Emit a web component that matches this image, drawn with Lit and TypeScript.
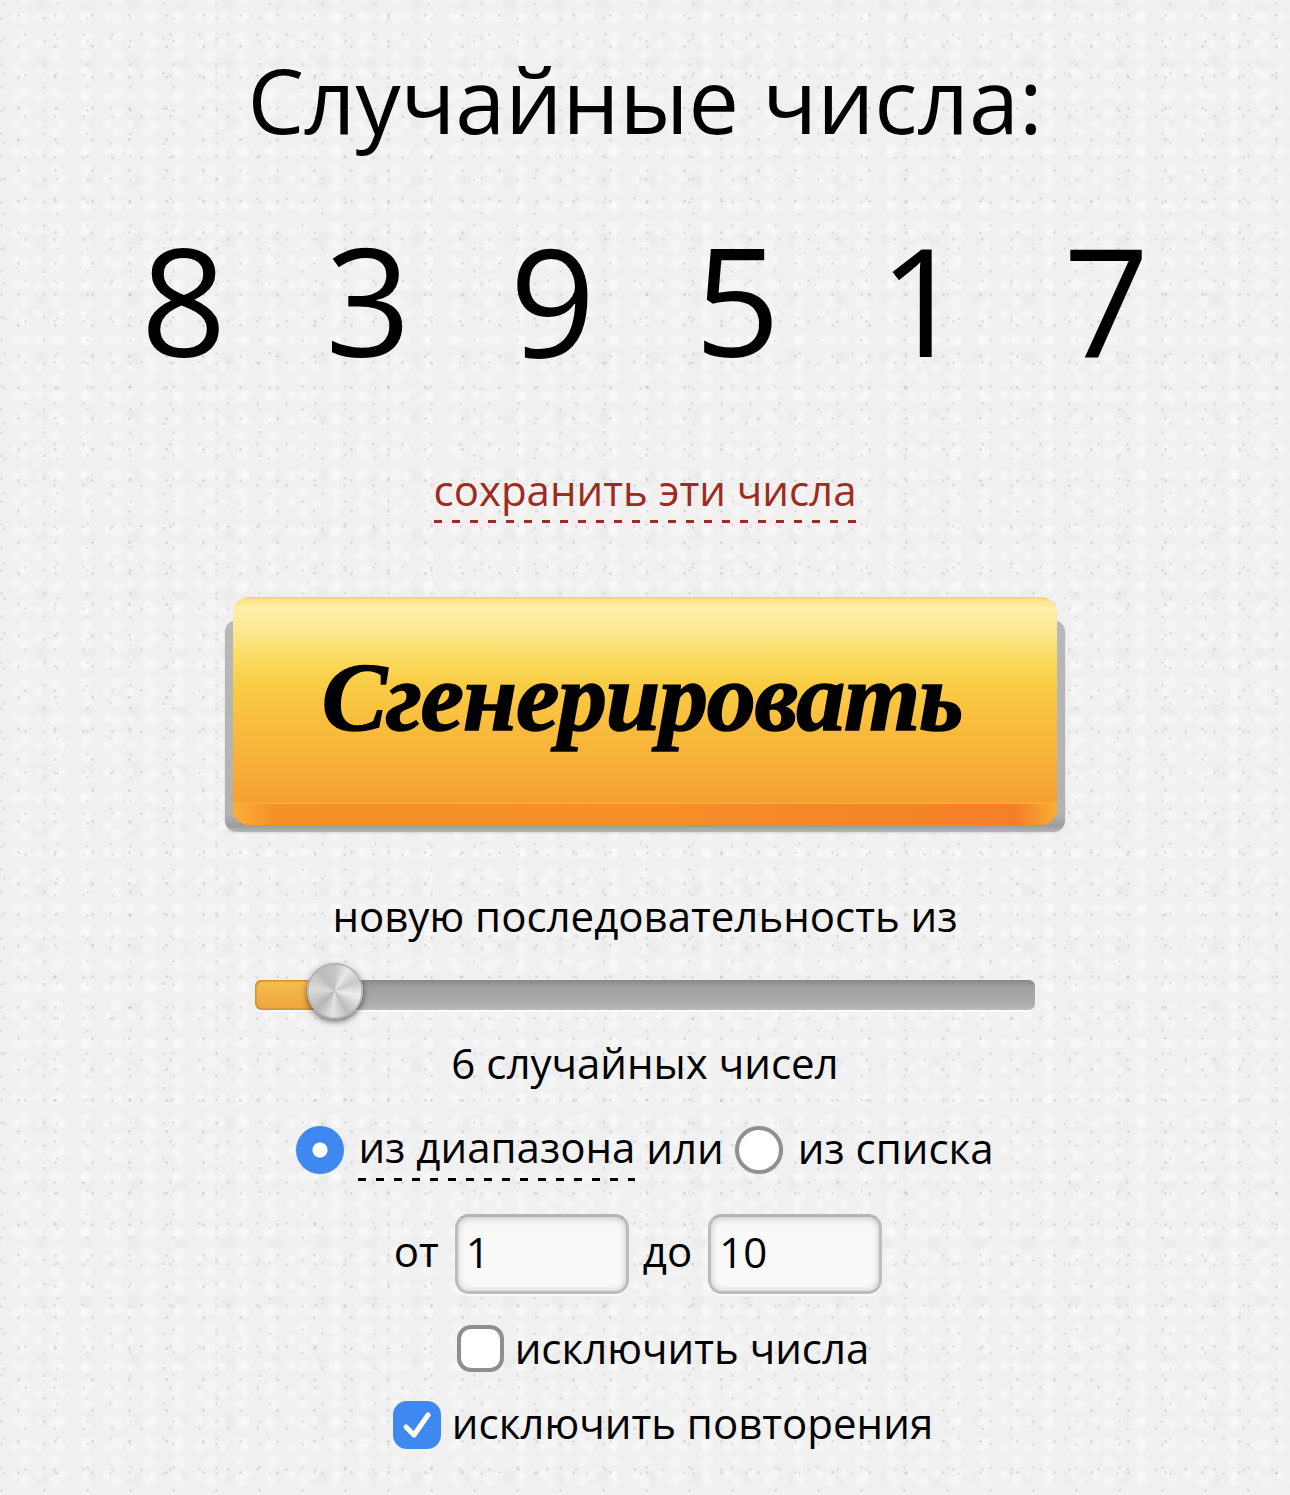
import { LitElement, html, css } from "lit";
import { customElement } from "lit/decorators.js";

const digits = [8, 3, 9, 5, 1, 7];

@customElement("app-root")
export class AppRoot extends LitElement {
  static styles = css`
    :host {
      display: block;
      width: 1290px;
      height: 1495px;
      overflow: hidden;
      color: #000;
      font-family: "Open Sans", "Noto Sans", sans-serif;
      font-size: 42px;
      background-color: #f0f0f0;
      background-image:
        radial-gradient(circle, rgba(110,110,110,.2) .8px, transparent 2px),
        radial-gradient(circle, rgba(110,110,110,.17) .8px, transparent 2px),
        radial-gradient(circle, rgba(110,110,110,.15) .8px, transparent 2px),
        radial-gradient(circle, rgba(110,110,110,.14) .8px, transparent 2px),
        radial-gradient(circle, rgba(255,255,255,.42) 2px, transparent 6px),
        radial-gradient(circle, rgba(255,255,255,.36) 3px, transparent 8px),
        radial-gradient(circle, rgba(150,150,150,.05) 3px, transparent 9px);
      background-size: 37px 31px, 29px 41px, 43px 23px, 53px 35px, 23px 27px, 31px 19px, 47px 59px;
      background-position: 0 0, 11px 14px, 23px 7px, 31px 21px, 4px 3px, 9px 8px, 17px 33px;
    }
    .page {
      display: flex;
      flex-direction: column;
      align-items: center;
    }
    h1 {
      margin: 38px 0 0;
      font-size: 90px;
      font-weight: 400;
      line-height: 122px;
      white-space: nowrap;
    }
    .digits {
      display: flex;
      margin-top: 37px;
      font-size: 150px;
      line-height: 204px;
    }
    .digits span { width: 184.6px; text-align: center; }
    .save {
      margin-top: 64px;
      color: #9e2b20;
      line-height: 50px;
      height: 58px;
      box-sizing: border-box;
      white-space: nowrap;
      background-image: linear-gradient(90deg, currentColor 8px, transparent 8px);
      background-size: 18px 3px;
      background-repeat: repeat-x;
      background-position: 0 bottom;
    }
    .gen-wrap {
      position: relative;
      margin-top: 74px;
      width: 824px;
      height: 228px;
    }
    .gen-wrap::before {
      content: "";
      position: absolute;
      left: -8px;
      right: -8px;
      top: 23px;
      bottom: -7px;
      border-radius: 12px;
      background: linear-gradient(#b8b8b8, #b2b2b2 92%, #9c9c9c 97%, #b5b5b5);
      box-shadow: 0 1px 2px rgba(0,0,0,.12);
    }
    .gen {
      position: relative;
      display: flex;
      align-items: center;
      justify-content: center;
      box-sizing: border-box;
      width: 100%;
      height: 100%;
      padding: 0 6px 28px 0;
      border: 0;
      border-radius: 16px;
      overflow: hidden;
      color: #000;
      font-family: "Liberation Serif", "DejaVu Serif", serif;
      font-style: italic;
      font-weight: 700;
      font-size: 98px;
      line-height: 1;
      letter-spacing: -1.3px;
      -webkit-text-stroke: 1.6px #000;
      background: linear-gradient(#f2d24e 0, #f7e283 1%, #fdeea8 5%, #fce995 14%, #fbdc62 26%, #f9cd45 38%, #f9c23f 50%, #f7b038 72%, #f4a033 90%, #f6a634 100%);
    }
    .gen::after {
      content: "";
      position: absolute;
      left: 0;
      right: 0;
      bottom: 0;
      height: 21px;
      background: linear-gradient(90deg, #f9ae36 0, #f69029 5%, #f68f29 50%, #f47f27 95%, #f9ae36 100%);
      border-top: 1px solid #f9b33a;
      border-radius: 0 0 16px 16px;
    }
    .seq { margin-top: 66px; line-height: 50px; white-space: nowrap; }
    .slider {
      position: relative;
      margin-top: 39px;
      width: 780px;
      height: 30px;
      border-radius: 6px;
      background: linear-gradient(#878787, #a0a0a0 25%, #aeaeae 85%, #bcbcbc);
      box-shadow: 0 2px 0 #fafafa;
    }
    .fill {
      position: absolute;
      left: 0;
      top: 0;
      bottom: 0;
      width: 70px;
      border-radius: 8px 0 0 8px;
      background: linear-gradient(#f5bd50, #efa43b);
      box-shadow: inset 0 0 0 1.5px #d88e2b;
    }
    .thumb {
      position: absolute;
      left: 52px;
      top: -17px;
      width: 56px;
      height: 56px;
      border-radius: 50%;
      background: conic-gradient(from 0deg, #c4c4c4, #e9e9e9 30deg, #c8c8c8 65deg, #ededed 100deg, #bdbdbd 150deg, #e4e4e4 185deg, #b5b5b5 225deg, #dcdcdc 275deg, #bcbcbc 320deg, #c4c4c4);
      box-shadow: inset 0 0 0 1.5px #b0b0b0, 0 3px 6px rgba(0,0,0,.55);
    }
    .count { margin-top: 28px; line-height: 50px; white-space: nowrap; }
    .mode {
      display: flex;
      align-items: center;
      margin-top: 34px;
      height: 50px;
      white-space: nowrap;
    }
    .radio {
      flex: none;
      box-sizing: border-box;
      width: 48px;
      height: 48px;
      margin-top: 6px;
      border-radius: 50%;
      background: #fff;
      border: 4px solid #909090;
      box-shadow: 0 0 1px rgba(0,0,0,.2);
    }
    .radio.on {
      border: 0;
      background: radial-gradient(circle, #fff 7px, #3f88f0 8px);
    }
    .dashed {
      position: relative;
      height: 50px;
      line-height: 50px;
    }
    .dashed::after {
      content: "";
      position: absolute;
      left: 0;
      right: 0;
      bottom: -9px;
      height: 3px;
      background-image: linear-gradient(90deg, #000 8px, transparent 8px);
      background-size: 18px 3px;
    }
    .ml15 { margin-left: 15px; }
    .ml14 { margin-left: 14px; }
    .ml11 { margin-left: 11px; }
    .range {
      display: flex;
      align-items: center;
      margin-top: 42px;
      height: 80px;
    }
    .range span { margin-bottom: 7px; }
    .range input {
      box-sizing: border-box;
      width: 174px;
      height: 80px;
      margin: 0 14px 0 16px;
      padding: 0 8px 5px;
      border: 3px solid #bcbcbc;
      border-top-color: #b3b3b3;
      border-radius: 14px;
      outline: none;
      font: inherit;
      color: #000;
      background: #f9f9f9;
      box-shadow: inset 0 3px 7px rgba(0,0,0,.13), inset 0 -2px 6px rgba(0,0,0,.1), 0 2px 0 #fbfbfb;
    }
    .check {
      display: flex;
      align-items: center;
      height: 50px;
      margin-left: 36px;
      white-space: nowrap;
    }
    .check.first { margin-top: 28px; }
    .check.second { margin-top: 25px; }
    .box {
      flex: none;
      box-sizing: border-box;
      width: 47px;
      height: 47px;
      margin-top: 3px;
      border-radius: 14px;
      background: #fff;
      border: 4px solid #8e8e8e;
    }
    .box.on {
      display: flex;
      align-items: center;
      justify-content: center;
      margin-top: 5px;
      border: 0;
      width: 48px;
      height: 48px;
      background: #3f88f0;
    }
    .box svg { display: block; width: 32px; height: 32px; }
  `;

  render() {
    return html`
      <div class="page">
        <h1>Случайные числа:</h1>
        <div class="digits">${digits.map((d) => html`<span>${d}</span>`)}</div>
        <div class="save">сохранить эти числа</div>
        <div class="gen-wrap"><button class="gen">Сгенерировать</button></div>
        <div class="seq">новую последовательность из</div>
        <div class="slider">
          <div class="fill"></div>
          <div class="thumb"></div>
        </div>
        <div class="count">6 случайных чисел</div>
        <div class="mode">
          <span class="radio on"></span>
          <span class="dashed ml14">из диапазона</span>&nbsp;или&nbsp;
          <span class="radio"></span>
          <span class="ml15">из списка</span>
        </div>
        <div class="range">
          <span>от</span>
          <input value="1" />
          <span>до</span>
          <input value="10" />
        </div>
        <div class="check first">
          <span class="box"></span>
          <span class="ml11">исключить числа</span>
        </div>
        <div class="check second">
          <span class="box on">
            <svg viewBox="0 0 32 32" fill="none" stroke="#fff" stroke-width="5" stroke-linecap="round" stroke-linejoin="round">
              <path d="M5 18l8 8L27 6" />
            </svg>
          </span>
          <span class="ml11">исключить повторения</span>
        </div>
      </div>
    `;
  }
}
